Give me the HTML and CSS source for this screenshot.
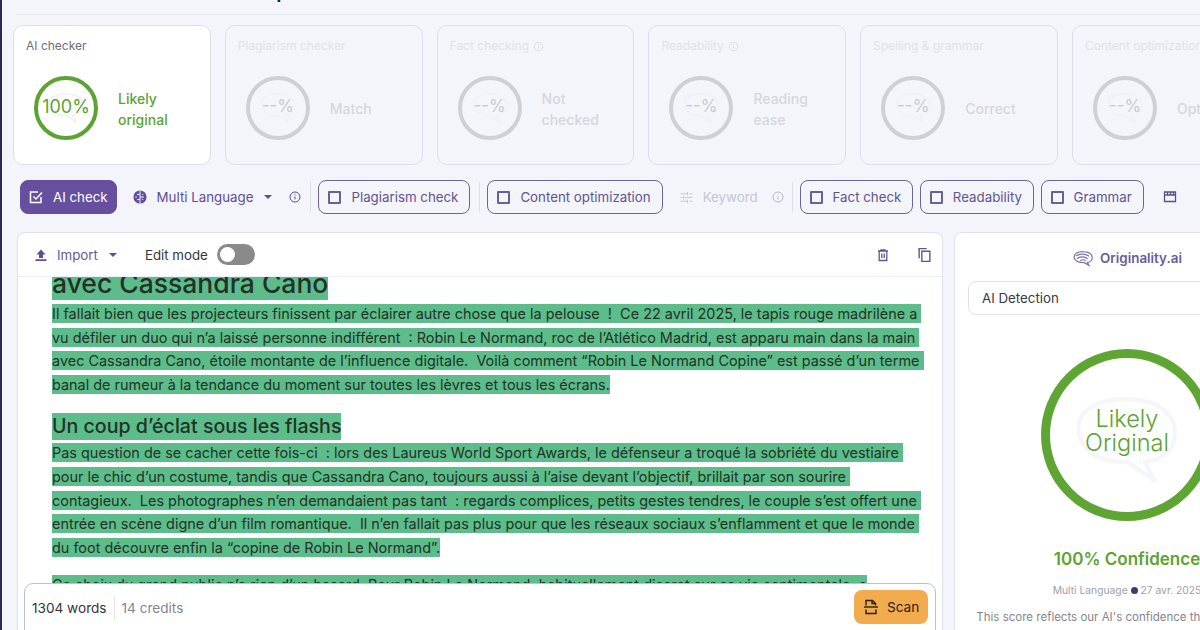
FILE: index.html
```html
<!DOCTYPE html>
<html lang="fr">
<head>
<meta charset="utf-8">
<title>Originality.ai</title>
<link rel="stylesheet" href="styles.css">
</head>
<body>
<div class="page">
  <header class="topbar"><h1>Robin Le Normand et sa copine : le secret dévoilé</h1></header>

  <section class="cards">
    <article class="card active">
      <div class="card-title">AI checker</div>
      <div class="card-body">
        <div class="ring green"><svg class="ghost-sm" viewBox="0 0 110 90"><path d="M8 38C4 16 26 4 54 4c26 0 50 10 50 34 0 18-14 27-30 29l10 19-27-19C30 67 12 58 8 38z"/></svg><span>100%</span></div>
        <div class="label green-text">Likely<br>original</div>
      </div>
    </article>
    <article class="card">
      <div class="card-title">Plagiarism checker</div>
      <div class="card-body"><div class="ring"><svg class="ghost-sm" viewBox="0 0 110 90"><path d="M8 38C4 16 26 4 54 4c26 0 50 10 50 34 0 18-14 27-30 29l10 19-27-19C30 67 12 58 8 38z"/></svg><span>--%</span></div><div class="label">Match</div></div>
    </article>
    <article class="card">
      <div class="card-title">Fact checking <svg class="mini" viewBox="0 0 12 12"><circle cx="6" cy="6" r="4.6"/><path d="M6 5.4v3M6 3.4v1"/></svg></div>
      <div class="card-body"><div class="ring"><svg class="ghost-sm" viewBox="0 0 110 90"><path d="M8 38C4 16 26 4 54 4c26 0 50 10 50 34 0 18-14 27-30 29l10 19-27-19C30 67 12 58 8 38z"/></svg><span>--%</span></div><div class="label">Not<br>checked</div></div>
    </article>
    <article class="card">
      <div class="card-title">Readability <svg class="mini" viewBox="0 0 12 12"><circle cx="6" cy="6" r="4.6"/><path d="M6 5.4v3M6 3.4v1"/></svg></div>
      <div class="card-body"><div class="ring"><svg class="ghost-sm" viewBox="0 0 110 90"><path d="M8 38C4 16 26 4 54 4c26 0 50 10 50 34 0 18-14 27-30 29l10 19-27-19C30 67 12 58 8 38z"/></svg><span>--%</span></div><div class="label">Reading<br>ease</div></div>
    </article>
    <article class="card">
      <div class="card-title">Spelling &amp; grammar</div>
      <div class="card-body"><div class="ring"><svg class="ghost-sm" viewBox="0 0 110 90"><path d="M8 38C4 16 26 4 54 4c26 0 50 10 50 34 0 18-14 27-30 29l10 19-27-19C30 67 12 58 8 38z"/></svg><span>--%</span></div><div class="label">Correct</div></div>
    </article>
    <article class="card">
      <div class="card-title">Content optimization</div>
      <div class="card-body"><div class="ring"><svg class="ghost-sm" viewBox="0 0 110 90"><path d="M8 38C4 16 26 4 54 4c26 0 50 10 50 34 0 18-14 27-30 29l10 19-27-19C30 67 12 58 8 38z"/></svg><span>--%</span></div><div class="label">Optimized</div></div>
    </article>
  </section>

  <nav class="toolbar">
    <button class="btn primary"><svg class="ic" viewBox="0 0 16 16"><path d="M13 8v5.500H2.500V3H10"/><path d="M5.500 7.500l2.500 2.500 6-6.500"/></svg>AI check</button>
    <div class="plain lang">
      <svg class="brain" viewBox="0 0 16 16"><circle cx="8" cy="8" r="7.500"/><path class="cut" d="M8 .5v15M8 5H4.500M8 11H4.500M8 8h4.500M11.500 4.500l-1 1.500M11.500 11.500l-1-1.500M2.500 8h2"/></svg>
      Multi Language <i class="caret"></i>
      <svg class="info" viewBox="0 0 12 12"><circle cx="6" cy="6" r="5"/><path d="M6 5.400v3M6 3.200v1"/></svg>
    </div>
    <span class="sep s1"></span>
    <button class="btn"><i class="box"></i>Plagiarism check</button>
    <span class="sep s2"></span>
    <button class="btn"><i class="box"></i>Content optimization</button>
    <div class="plain faded">
      <svg class="tune" viewBox="0 0 16 16"><path d="M1.500 4h7M11 4h3.500M9 2v4M1.500 8h2.500M6.500 8h8M5 6v4M1.500 12h7M11 12h3.500M9 10v4"/></svg>
      Keyword
      <svg class="info" viewBox="0 0 12 12"><circle cx="6" cy="6" r="5"/><path d="M6 5.400v3M6 3.200v1"/></svg>
    </div>
    <span class="sep"></span>
    <div class="btn-group">
      <button class="btn"><i class="box"></i>Fact check</button>
      <button class="btn"><i class="box"></i>Readability</button>
      <button class="btn"><i class="box"></i>Grammar</button>
    </div>
    <svg class="clap" viewBox="0 0 14 12"><path d="M1.500 1v9.500h11V1zM1.500 4h11"/><path d="M4.500 1v3M7.500 1v3M10.500 1v3"/></svg>
  </nav>

  <main class="workspace">
    <section class="editor">
      <div class="editor-head">
        <svg class="upload" viewBox="0 0 14 14"><path d="M7 1.500L11.500 6.500H9v3.500H5V6.500H2.500zM1.500 11.300h11v1.700h-11z"/></svg>
        <span class="import">Import</span><i class="caret"></i>
        <span class="edit">Edit mode</span>
        <span class="toggle"><i></i></span>
        <span class="grow"></span>
        <svg class="tool" viewBox="0 0 14 14"><path d="M2 3h10M5 3V1.800h4V3M3.200 3v9.500h7.600V3M5.800 5.500v4.500M8.200 5.500v4.500"/></svg>
        <svg class="tool copy" viewBox="0 0 14 14"><path d="M2 10V1h7"/><path d="M4.500 3.500h7.500V13H4.500z"/></svg>
      </div>
      <div class="doc">
        <h2 class="first"><mark>avec Cassandra Cano</mark></h2>
        <p><mark>Il fallait bien que les projecteurs finissent par éclairer autre chose que la pelouse  !  Ce 22 avril 2025, le tapis rouge madrilène a vu défiler un duo qui n’a laissé personne indifférent  : Robin Le Normand, roc de l’Atlético Madrid, est apparu main dans la main avec Cassandra Cano, étoile montante de l’influence digitale.  Voilà comment “Robin Le Normand Copine” est passé d’un terme banal de rumeur à la tendance du moment sur toutes les lèvres et tous les écrans.</mark></p>
        <h3><mark>Un coup d’éclat sous les flashs</mark></h3>
        <p><mark>Pas question de se cacher cette fois-ci  : lors des Laureus World Sport Awards, le défenseur a troqué la sobriété du vestiaire pour le chic d’un costume, tandis que Cassandra Cano, toujours aussi à l’aise devant l’objectif, brillait par son sourire contagieux.  Les photographes n’en demandaient pas tant  : regards complices, petits gestes tendres, le couple s’est offert une entrée en scène digne d’un film romantique.  Il n’en fallait pas plus pour que les réseaux sociaux s’enflamment et que le monde du foot découvre enfin la “copine de Robin Le Normand”.</mark></p>
        <p class="last"><mark>Ce choix du grand public n’a rien d’un hasard. Pour Robin Le Normand, habituellement discret sur sa vie sentimentale, a</mark></p>
      </div>
      <div class="scanbar">
        <span class="words">1304 words</span>
        <span class="credits">14 credits</span>
        <span class="grow"></span>
        <button class="scan"><svg viewBox="0 0 16 16"><path d="M3 6.500V1.500h6.500L12.500 4.500v2"/><path d="M9 1.500v3h3.500"/><path d="M1 8h14"/><path d="M3 10.500v4h10v-4"/></svg>Scan</button>
      </div>
    </section>
    <aside class="result">
      <div class="brand"><svg viewBox="0 0 24 18"><path d="M2.500 8.500C1.500 4 7 1 12.500 1.500c5.500 0 10 2.500 9.500 7-.3 3-3 4.500-5 4.800l1.500 3.200-5-3C8 13.500 3.500 12.500 2.500 8.500z"/><path d="M4.500 6c4-2.500 10-2.500 14 .5M5.500 9c3-2.500 8.500-2.500 11.500.5M9 11.500c2-1.500 4-1.500 6 0"/></svg>Originality.ai</div>
      <div class="select">AI Detection</div>
      <div class="big-ring">
        <svg class="ghost" viewBox="0 0 110 90"><path d="M8 38C4 16 26 4 54 4c26 0 50 10 50 34 0 18-14 27-30 29l10 19-27-19C30 67 12 58 8 38z"/></svg>
        <span>Likely<br>Original</span>
      </div>
      <div class="confidence">100% Confidence</div>
      <div class="meta">Multi Language <i></i> 27 avr. 2025</div>
      <p class="explain">This score reflects our AI's confidence that this content<br>was produced by an AI tool. A higher</p>
    </aside>
  </main>
</div>
</body>
</html>
```
FILE: styles.css
```css
* { box-sizing: border-box; }
html, body { margin: 0; height: 630px; overflow: hidden; }
body { background: #f4f5fb; font-family: "Inter", "Liberation Sans", sans-serif; color: #2a2a33; }
.page { width: 1200px; height: 630px; overflow: hidden; border-left: 2px solid #2c2650; position: relative; }
.topbar { height: 15px; margin-left: 14px; border-bottom: 1px solid #e8e9f2; overflow: hidden; }
.topbar h1 { margin: -24px 0 0; padding-left: 2px; font-size: 20px; line-height: 30px; font-weight: 600; white-space: nowrap; color: #1c1c24; }

.cards { display: flex; gap: 14px; padding: 10px 0 0 11px; width: 1260px; }
.card { flex: 0 0 197.800px; height: 140px; border: 1px solid #dcdeec; border-radius: 10px; padding: 13px 12px; color: #d9dae4; }
.card.active { background: #fff; }
.card-title { font-size: 12px; line-height: 14px; color: #e0e1ea; display: flex; align-items: center; gap: 4px; white-space: nowrap; }
.active .card-title { color: #6d6d78; }
.mini { width: 11px; height: 11px; fill: none; stroke: #d8d9e3; stroke-width: 1; }
.card-body { display: flex; align-items: center; gap: 20px; margin-top: 23px; padding-left: 8px; }
.ring { width: 64px; height: 64px; flex: none; border-radius: 50%; border: 4px solid #cfd0d4; display: flex; align-items: center; justify-content: center; font-size: 17px; color: #c9cad2; padding-bottom: 4px; position: relative; }
.ring span { position: relative; }
.ghost-sm { position: absolute; left: 9px; top: 11px; width: 38px; height: 34px; fill: none; stroke: #f0f1f7; stroke-width: 4; }
.ring.green { border-color: #5ca331; color: #5ca331; font-size: 18px; }
.label { font-size: 14px; line-height: 21px; font-weight: 500; color: #d5d6de; white-space: nowrap; padding-top: 1px; }
.green-text { color: #5ca331; }

.toolbar { display: flex; align-items: center; height: 34px; margin-top: 15px; padding-left: 18px; white-space: nowrap; color: #5f4c9c; font-size: 13.300px; }
.btn { height: 34px; border: 1px solid #6f6498; border-radius: 8px; background: transparent; color: #5f5490; font: inherit; display: flex; align-items: center; gap: 10px; padding: 0 11px 0 9px; flex: none; }
.btn.primary { background: #654f9e; color: #fff; border-color: #654f9e; margin-right: 16px; padding: 0 8px 0 7px; gap: 9px; }
.btn-group { display: flex; gap: 6.500px; flex: none; }
.ic { width: 16px; height: 16px; fill: none; stroke: #fff; stroke-width: 1.500; }
.box { width: 13px; height: 13px; border: 2px solid #6b6195; border-radius: 1px; flex: none; }
.plain { display: flex; align-items: center; flex: none; }
.brain { width: 14px; height: 14px; margin-right: 10px; fill: #5f4c9c; }
.brain .cut { fill: none; stroke: #f4f5fb; stroke-width: 1.100; }
.caret { width: 0; height: 0; border: 4px solid transparent; border-top: 4px solid #5f4c9c; border-bottom: 0; display: inline-block; margin-left: 11px; }
.info { width: 12px; height: 12px; fill: none; stroke: #5f4c9c; stroke-width: 1; margin-left: 17px; }
.sep { width: 1px; height: 30px; background: #dcdeea; margin: 0 7px 0 8px; flex: none; }
.s1 { margin-left: 9px; }
.s2 { margin: 0 7px 0 9px; }
.faded { color: #c6c5d6; margin-left: 16px; }
.tune { width: 15px; height: 15px; fill: none; stroke: #c6c5d6; stroke-width: 1; margin-right: 9px; }
.faded .info { stroke: #b6b5c6; margin-left: 14px; }
.clap { width: 14px; height: 12px; fill: none; stroke: #5a5088; stroke-width: 1.300; margin-left: 19px; flex: none; }

.workspace { display: flex; gap: 11px; margin-top: 18px; padding-left: 15px; width: 1290px; }
.editor { flex: 0 0 926px; height: 420px; background: #fff; border: 1px solid #dfe1ef; border-radius: 8px 8px 0 0; position: relative; overflow: hidden; }
.editor-head { height: 44px; display: flex; align-items: center; padding: 0 10px 0 16px; border-bottom: 1px solid #eeeff6; font-size: 13.300px; }
.upload { width: 14px; height: 14px; fill: #5f4c9c; margin-right: 9px; }
.import { color: #65569c; }
.edit { color: #34343c; margin-left: 28px; }
.toggle { width: 38px; height: 21px; margin-left: 9px; background: #8a8a8a; border-radius: 11px; position: relative; display: block; }
.toggle i { position: absolute; left: 3px; top: 3px; width: 15px; height: 15px; border-radius: 50%; background: #fff; }
.grow { flex: 1; }
.tool { width: 14px; height: 14px; fill: none; stroke: #5f5490; stroke-width: 1.300; margin-left: 27px; }
.copy { width: 15px; height: 16px; }
.doc { padding: 0 14px 0 34px; height: 400px; overflow: hidden; }
.doc mark { background: #5cbd8a; color: #223228; padding: 1px 0; }
.doc h2 { margin: -11px 0 0; font-size: 26.500px; line-height: 35px; font-weight: 500; }
.doc h3 { margin: 16px 0 0; font-size: 19.600px; line-height: 28px; font-weight: 500; }
.doc h3 mark { padding: 1px 0 2px; }
.doc p { margin: 1px 0 0; font-size: 14.450px; line-height: 23.600px; white-space: pre-wrap; }
.doc p.last { margin-top: 14px; }
.scanbar { position: absolute; left: 6px; right: 6px; top: 350px; height: 60px; background: #fff; border: 1px solid #bdbddd; border-radius: 9px; display: flex; align-items: flex-start; padding: 6px 7px; font-size: 13.600px; }
.words { color: #33333c; padding-right: 7px; border-right: 1px solid #e4e4ea; height: 24px; margin-top: 6px; line-height: 24px; }
.credits { color: #85858e; margin-left: 7px; line-height: 36px; }
.scan { height: 34px; width: 74px; background: #f2ac4e; border: 0; border-radius: 8px; display: flex; align-items: center; justify-content: flex-start; padding: 0 0 0 9px; gap: 8px; font: inherit; color: #2a1f10; }
.scan svg { width: 16px; height: 16px; fill: none; stroke: #2a1f10; stroke-width: 1.400; }

.result { flex: 0 0 320px; height: 420px; background: #fff; border: 1px solid #dfe1ef; border-radius: 8px 8px 0 0; padding: 0 13px; text-align: center; overflow: hidden; }
.brand { width: 320px; height: 48px; padding-top: 2px; display: flex; align-items: center; justify-content: center; gap: 6px; font-size: 13.400px; font-weight: 600; color: #6a5aa0; margin-left: -1px; }
.brand svg { width: 22px; height: 17px; fill: none; stroke: #7d70b0; stroke-width: 1.300; }
.select { height: 34px; width: 320px; border: 1px solid #dfe1ef; border-radius: 8px; text-align: left; padding: 0 13px; line-height: 32px; font-size: 13.300px; color: #3a3a42; }
.big-ring { width: 172px; height: 172px; margin: 34px 0 0 73px; padding-bottom: 8px; border: 9px solid #5ea534; border-radius: 50%; position: relative; display: flex; align-items: center; justify-content: center; color: #5ca331; font-size: 23.500px; line-height: 24px; font-weight: 300; }
.big-ring span { position: relative; }
.ghost { position: absolute; left: 21px; top: 37px; width: 110px; height: 90px; fill: none; stroke: #f5f6fb; stroke-width: 4; }
.confidence { width: 320px; margin: 26px 0 0 -1px; color: #5ca331; font-size: 17px; font-weight: 600; line-height: 24px; white-space: nowrap; }
.meta { width: 320px; margin: 12px 0 0 -1px; font-size: 10.300px; line-height: 14px; color: #a0a0a8; white-space: nowrap; }
.meta i { display: inline-block; width: 7px; height: 7px; border-radius: 50%; background: #3f3a68; }
.explain { width: 320px; margin: 11px 0 0 -1px; font-size: 11.500px; line-height: 18px; color: #85858e; white-space: nowrap; }
```
